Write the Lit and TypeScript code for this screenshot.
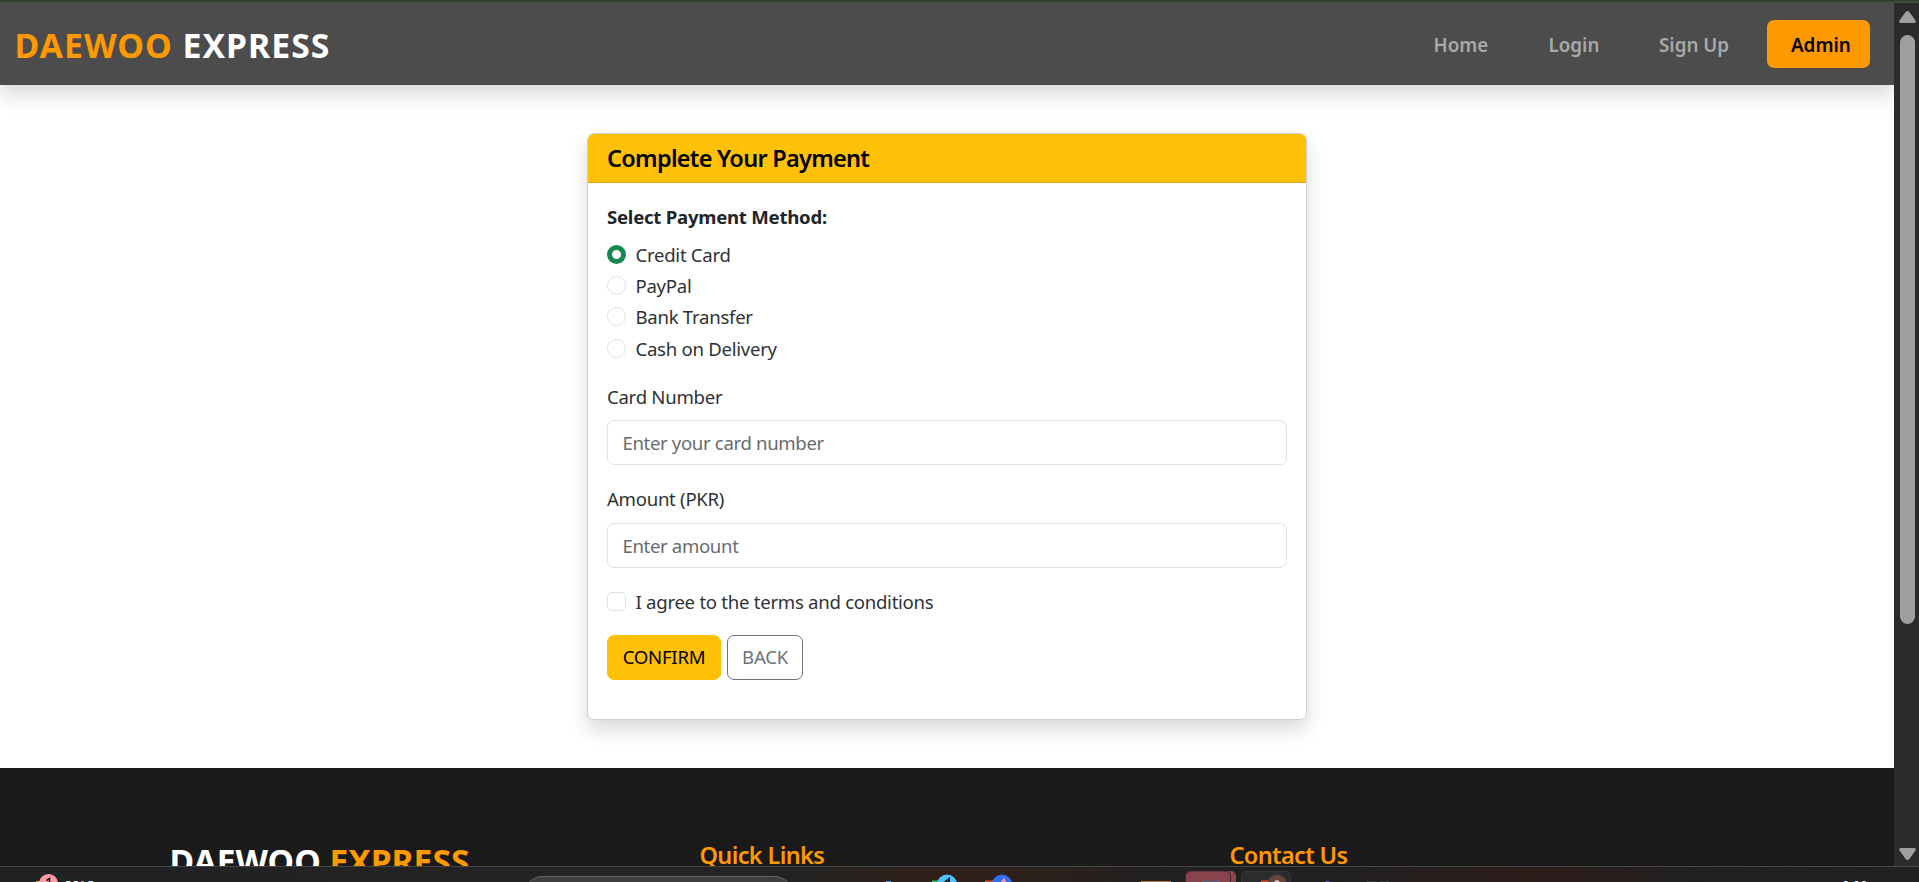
import { LitElement, html, css } from "lit";
import { customElement, state } from "lit/decorators.js";

@customElement("site-nav")
class SiteNav extends LitElement {
  static styles = css`
    :host { display: block; flex: none; position: relative; z-index: 1; }
    .nav { box-sizing: border-box; height: 82px; background: #4c4c4c; box-shadow: 0 9.6px 19.2px rgba(0, 0, 0, .15); display: flex; align-items: flex-start; justify-content: space-between; padding: 0 24px 0 14.5px; }
    .brand { font-size: 33.8px; font-weight: 700; color: #fff; line-height: 48px; padding-top: 18px; letter-spacing: 1px; white-space: nowrap; }
    .accent { color: #ff9900; }
    .links { display: grid; grid-template-columns: 115px 110.5px 108px 103px; padding-top: 17px; font-size: 18.8px; font-weight: 600; line-height: 50px; color: #a9a9a9; }
    .admin { background: #ff9900; color: #000; border-radius: 7px; padding-left: 24px; height: 48px; }
  `;
  render() {
    return html`<nav class="nav">
      <div class="brand"><span class="accent">DAEWOO</span> EXPRESS</div>
      <div class="links">
        <span>Home</span><span>Login</span><span>Sign Up</span><span class="admin">Admin</span>
      </div>
    </nav>`;
  }
}

@customElement("payment-card")
class PaymentCard extends LitElement {
  @state() method = "Credit Card";

  static styles = css`
    :host { display: block; }
    * { box-sizing: border-box; }
    .card { width: 720px; height: 587px; background: #fff; border: 1px solid #d0d0d0; border-radius: 7px; box-shadow: 0 9.6px 19.2px rgba(0, 0, 0, .15); overflow: hidden; }
    .head { height: 49px; background: #ffc107; border-bottom: 1px solid #dba60a; padding: 7px 19px 0; color: #000; font-size: 23.5px; font-weight: 600; line-height: 34px; letter-spacing: -.72px; }
    .body { padding: 19.5px 19px 0; font-size: 18.6px; line-height: 28.8px; letter-spacing: -.28px; color: #2e3236; }
    .legend { font-weight: 700; margin-bottom: 9.4px; letter-spacing: -.25px; color: #212529; }
    .row { display: flex; height: 31.4px; gap: 9.5px; }
    .row input { appearance: none; width: 19px; height: 19px; flex: none; margin: 4px 0 0; border: 1px solid #dee2e6; background: #fff; }
    .row input[type="radio"] { border-radius: 50%; }
    .row input[type="checkbox"] { border-radius: 5px; }
    .row input:checked { border: 5px solid #198754; }
    .label { display: block; margin: 16.8px 0 7.7px; }
    .label.second { margin-top: 20px; margin-bottom: 9.2px; }
    .field { display: block; width: 100%; height: 45px; border: 1px solid #dee2e6; border-radius: 7px; padding: 0 14.4px; font: inherit; letter-spacing: -.35px; color: #212529; background: #fff; outline: 0; }
    .field::placeholder { color: #686b6e; opacity: 1; }
    .terms { margin-top: 20px; }
    .actions { display: flex; gap: 6px; margin-top: 15.6px; }
    .btn { height: 45px; border-radius: 7px; font: inherit; letter-spacing: -.25px; padding: 0; border: 1px solid #ffc107; background: #ffc107; color: #000; width: 114px; }
    .back { width: 76px; background: #fff; border-color: #6c757d; color: #6c757d; }
  `;
  render() {
    const methods = ["Credit Card", "PayPal", "Bank Transfer", "Cash on Delivery"];
    return html`<div class="card">
      <div class="head">Complete Your Payment</div>
      <div class="body">
        <div class="legend">Select Payment Method:</div>
        ${methods.map((m) => html`<label class="row">
          <input type="radio" name="method" .checked=${m === this.method} @change=${() => (this.method = m)} />${m}
        </label>`)}
        <label class="label">Card Number</label>
        <input class="field" placeholder="Enter your card number" />
        <label class="label second">Amount (PKR)</label>
        <input class="field" placeholder="Enter amount" />
        <label class="row terms"><input type="checkbox" />I agree to the terms and conditions</label>
        <div class="actions">
          <button class="btn">CONFIRM</button><button class="btn back">BACK</button>
        </div>
      </div>
    </div>`;
  }
}

@customElement("site-footer")
class SiteFooter extends LitElement {
  static styles = css`
    :host { display: block; flex: none; }
    .footer { box-sizing: border-box; height: 98px; background: #1a1a1a; overflow: hidden; display: grid; grid-template-columns: 530px 530px 1fr; padding: 72px 0 0 169.5px; color: #ff9900; }
    .brand { font-size: 33.6px; font-weight: 700; line-height: 40px; margin-top: 1px; color: #fff; }
    .accent { color: #ff9900; }
    .title { font-size: 23.5px; font-weight: 600; line-height: 30px; letter-spacing: -.65px; }
  `;
  render() {
    return html`<footer class="footer">
      <div class="brand">DAEWOO <span class="accent">EXPRESS</span></div>
      <div class="title">Quick Links</div>
      <div class="title">Contact Us</div>
    </footer>`;
  }
}

@customElement("task-bar")
class TaskBar extends LitElement {
  static styles = css`
    :host { display: block; flex: none; height: 16px; }
    .bar { display: block; width: 1919px; height: 16px; font-family: "Open Sans", sans-serif; }
  `;
  render() {
    return html`<svg class="bar" viewBox="0 0 1919 16">
      <defs>
        <linearGradient id="bg">
          <stop offset="0" stop-color="#212224" /><stop offset=".42" stop-color="#242322" />
          <stop offset=".49" stop-color="#301f18" /><stop offset=".55" stop-color="#2b201c" />
          <stop offset=".61" stop-color="#212122" /><stop offset=".7" stop-color="#212020" />
          <stop offset=".8" stop-color="#2e1d1b" /><stop offset=".88" stop-color="#212020" /><stop offset="1" stop-color="#212122" />
        </linearGradient>
      </defs>
      <rect width="1919" height="16" fill="url(#bg)" />
      <rect width="1919" height="1" fill="#474747" />
      <path d="M36 15h4v1h-4z" fill="#d9a441" />
      <circle cx="48.5" cy="17.5" r="9.5" fill="#ff99a4" />
      <path d="M46.5 14.5L49.5 12.5V17" fill="none" stroke="#222" stroke-width="1.6" />
      <text x="65" y="23.5" font-size="13" fill="#fff">33°C</text>
      <rect x="524.5" y="10.5" width="268" height="36" rx="18" fill="#3e3e3f" stroke="#666" />
      <path d="M886 15h5v1h-5z" fill="#35a6d8" />
      <path d="M932 14.5h8v1.5h-8z" fill="#33b864" />
      <circle cx="947" cy="18.5" r="10" fill="#4cc2ff" />
      <path d="M944 17L949 13V16" fill="none" stroke="#0b1a24" stroke-width="2" />
      <path d="M985 14.5h9v1.5h-9z" fill="#d94a3a" />
      <circle cx="1002" cy="18.5" r="10" fill="#2f6fed" />
      <path d="M1001 16L1004 11.5L1006 16z" fill="#f39aa8" />
      <path d="M1141 15h30v1h-30z" fill="#b9733f" />
      <rect x="1190" y="5" width="46" height="30" rx="5" fill="#8a454d" />
      <rect x="1185.5" y="5" width="45" height="30" rx="5" fill="#87444c" stroke="#3b2427" stroke-width="1" />
      <path d="M1201 15h19v1h-19z" fill="#446a91" />
      <rect x="1241.5" y="5.5" width="49" height="30" rx="5" fill="#2c2c2e" stroke="#39393b" />
      <path d="M1261 14.5h9v1.5h-9z" fill="#d94a35" />
      <circle cx="1277" cy="18" r="9.5" fill="#67453c" />
      <path d="M1274 16q3-4 6 0z" fill="#c9c0bb" />
      <path d="M1325.500 15h4v1h-4z" fill="#665b9b" />
      <path d="M1367 15h9v1h-9zM1380 15h9v1h-9z" fill="#38383a" />
      <text x="1842" y="23.5" font-size="13" fill="#fff">9:00</text>
    </svg>`;
  }
}

@customElement("app-root")
class AppRoot extends LitElement {
  static styles = css`
    :host { display: block; width: 1919px; height: 882px; overflow: hidden; background: #fff; font-family: "Noto Sans", "Open Sans", sans-serif; color: #212529; }
    .screen { display: flex; flex-direction: column; height: 882px; }
    .edge { height: 3px; flex: none; background: linear-gradient(#33402d 0 1px, #3b4737 1px 2px, #434b41 2px); }
    .view { display: flex; height: 863px; flex: none; }
    .page { width: 1894px; display: flex; flex-direction: column; overflow: hidden; }
    .main { box-sizing: border-box; height: 683px; flex: none; padding-top: 48px; display: flex; flex-direction: column; align-items: center; }
    .scroll { width: 25px; background: #2b2b2b; display: flex; flex-direction: column; align-items: center; box-sizing: border-box; padding: 8px 0 6px; }
    .thumb { width: 15px; height: 589px; background: #9f9f9f; border-radius: 8px; margin: 12px 0 auto 2px; }
    .arrow { display: block; width: 17px; height: 12px; margin-left: 2px; fill: #9f9f9f; }
  `;
  render() {
    return html`<div class="screen">
      <div class="edge"></div>
      <div class="view">
        <div class="page">
          <site-nav></site-nav>
          <div class="main"><payment-card></payment-card></div>
          <site-footer></site-footer>
        </div>
        <div class="scroll">
          <svg class="arrow" viewBox="0 0 17 12"><path d="M6.600 1.100Q8.500-1 10.400 1.100L16.500 9.500Q17.500 12 15 12H2Q-.5 12 .5 9.500Z" /></svg>
          <div class="thumb"></div>
          <svg class="arrow" viewBox="0 0 17 12"><path d="M6.600 10.900Q8.500 13 10.400 10.900L16.500 2.500Q17.500 0 15 0H2Q-.5 0 .5 2.500Z" /></svg>
        </div>
      </div>
      <task-bar></task-bar>
    </div>`;
  }
}
